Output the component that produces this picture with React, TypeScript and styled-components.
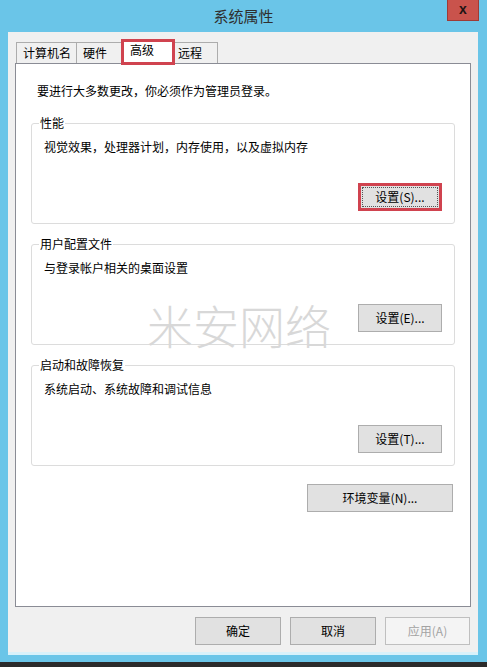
import React from "react";
import styled, { createGlobalStyle, css } from "styled-components";

const Global = createGlobalStyle`
  html, body { margin: 0; padding: 0; background: #2b2b2b; }
  body { font-family: "Noto Sans CJK SC", "Noto Sans", sans-serif; font-size: 12px; color: #000; }
  * { box-sizing: border-box; }
`;

const Frame = styled.div`
  width: 487px;
  height: 667px;
  background: #6ac5e8;
  display: flex;
  flex-direction: column;
  overflow: hidden;
`;

const TitleBar = styled.div`
  height: 32px;
  display: grid;
  grid-template-columns: 1fr auto 1fr;
  align-items: center;
`;

const Title = styled.div`
  grid-column: 2;
  font-size: 15px;
  color: #2f2f2f;
  line-height: 20px;
`;

const CloseBtn = styled.div`
  grid-column: 3;
  justify-self: end;
  align-self: start;
  margin-right: 8px;
  width: 32px;
  height: 21px;
  background: #c9534c;
  border: 1px solid #9e3b36;
  border-top: none;
  display: flex;
  align-items: center;
  justify-content: center;
  font-family: "Liberation Sans", Arial, sans-serif;
  font-weight: bold;
  font-size: 14px;
  color: #1e1414;
  line-height: 1;
  padding-bottom: 2px;
`;

const Client = styled.div`
  margin: 0 9px 0 8px;
  height: 620px;
  background: #f0f0f0;
  padding: 8px 7px 0 7px;
  display: flex;
  flex-direction: column;
`;

const TabStrip = styled.div`
  display: flex;
  align-items: flex-end;
  padding-left: 1px;
  height: 23px;
`;

const Tab = styled.div<{ $w: number; $active?: boolean }>`
  width: ${(p) => p.$w}px;
  height: 21px;
  border: 1px solid #acacac;
  border-bottom: none;
  background: #f0f0f0;
  padding: 1px 0 0 6px;
  line-height: 18px;
  white-space: nowrap;
  margin-left: -1px;
  &:first-child { margin-left: 0; }
  ${(p) =>
    p.$active &&
    css`
      position: relative;
      z-index: 1;
      width: ${p.$w + 4}px;
      height: 24px;
      margin: 0 -2px -1px -2px;
      background: #fff;
      padding: 0 0 0 7px;
      line-height: 17px;
      outline: 3px solid #d0434f;
      outline-offset: -2px;
    `}
`;

const Panel = styled.div`
  position: relative;
  height: 544px;
  background: #fff;
  border: 1px solid #8a8c95;
  padding: 19px 15px 0 15px;
  display: flex;
  flex-direction: column;
`;

const Intro = styled.div`
  margin-left: 6px;
  line-height: 16px;
`;

const Groups = styled.div`
  margin-top: 24px;
  display: flex;
  flex-direction: column;
  gap: 20px;
`;

const Group = styled.div`
  position: relative;
  height: 101px;
  border: 1px solid #dcdcdc;
  border-radius: 3px;
  padding: 15px 12px 12px 12px;
  display: flex;
  flex-direction: column;
`;

const Legend = styled.span`
  position: absolute;
  top: -9px;
  left: 7px;
  background: #fff;
  padding: 0 1px;
  line-height: 16px;
`;

const Desc = styled.div`
  line-height: 16px;
`;

const Button = styled.button<{ $w?: number; $h?: number; $focus?: boolean; $disabled?: boolean }>`
  width: ${(p) => p.$w ?? 84}px;
  height: ${(p) => p.$h ?? 28}px;
  background: #e1e1e1;
  border: 1px solid #adadad;
  font-family: "Noto Sans CJK SC", "Noto Sans", sans-serif;
  font-size: 12px;
  color: #000;
  padding: 0;
  line-height: 16px;
  ${(p) =>
    p.$focus &&
    css`
      border: 3px solid #d0434f;
      outline: 1px dotted #555;
      outline-offset: -5px;
    `}
  ${(p) =>
    p.$disabled &&
    css`
      background: #f4f4f4;
      border-color: #bfbfbf;
      color: #a3a3a3;
    `}
`;

const ButtonRow = styled.div`
  margin-top: auto;
  display: flex;
  justify-content: flex-end;
`;

const EnvRow = styled.div`
  margin-top: 18px;
  display: flex;
  justify-content: flex-end;
  padding-right: 2px;
`;

const Watermark = styled.div`
  position: absolute;
  left: 131px;
  top: 237px;
  font-size: 46px;
  line-height: 46px;
  font-weight: 200;
  color: #d8d8d8;
  letter-spacing: 0px;
  pointer-events: none;
  white-space: nowrap;
`;

const Footer = styled.div`
  margin-top: 10px;
  display: flex;
  justify-content: flex-end;
  gap: 9px;
  padding-right: 1px;
`;

const BottomEdge = styled.div`
  height: 3px;
  margin: 0 9px 0 8px;
  background: #d8f1fa;
`;

const Spacer = styled.div`
  flex: 1;
`;

const Dark = styled.div`
  height: 5px;
  background: #2b2b2b;
`;

const groups = [
  { title: "性能", desc: "视觉效果，处理器计划，内存使用，以及虚拟内存", btn: "设置(S)...", focus: true },
  { title: "用户配置文件", desc: "与登录帐户相关的桌面设置", btn: "设置(E)..." },
  { title: "启动和故障恢复", desc: "系统启动、系统故障和调试信息", btn: "设置(T)..." },
];

const tabs = [
  { label: "计算机名", w: 61 },
  { label: "硬件", w: 48 },
  { label: "高级", w: 48, active: true },
  { label: "远程", w: 47 },
];

export default function App() {
  return (
    <>
      <Global />
      <Frame>
        <TitleBar>
          <Title>系统属性</Title>
          <CloseBtn>x</CloseBtn>
        </TitleBar>
        <Client>
          <TabStrip>
            {tabs.map((t) => (
              <Tab key={t.label} $w={t.w} $active={t.active}>
                {t.label}
              </Tab>
            ))}
          </TabStrip>
          <Panel>
            <Intro>要进行大多数更改，你必须作为管理员登录。</Intro>
            <Groups>
              {groups.map((g) => (
                <Group key={g.title}>
                  <Legend>{g.title}</Legend>
                  <Desc>{g.desc}</Desc>
                  <ButtonRow>
                    <Button $focus={g.focus}>{g.btn}</Button>
                  </ButtonRow>
                </Group>
              ))}
            </Groups>
            <EnvRow>
              <Button $w={146} $h={28}>环境变量(N)...</Button>
            </EnvRow>
            <Watermark>米安网络</Watermark>
          </Panel>
          <Footer>
            <Button $w={86} $h={28}>确定</Button>
            <Button $w={86} $h={28}>取消</Button>
            <Button $w={85} $h={28} $disabled>应用(A)</Button>
          </Footer>
        </Client>
        <BottomEdge />
        <Spacer />
        <Dark />
      </Frame>
    </>
  );
}
